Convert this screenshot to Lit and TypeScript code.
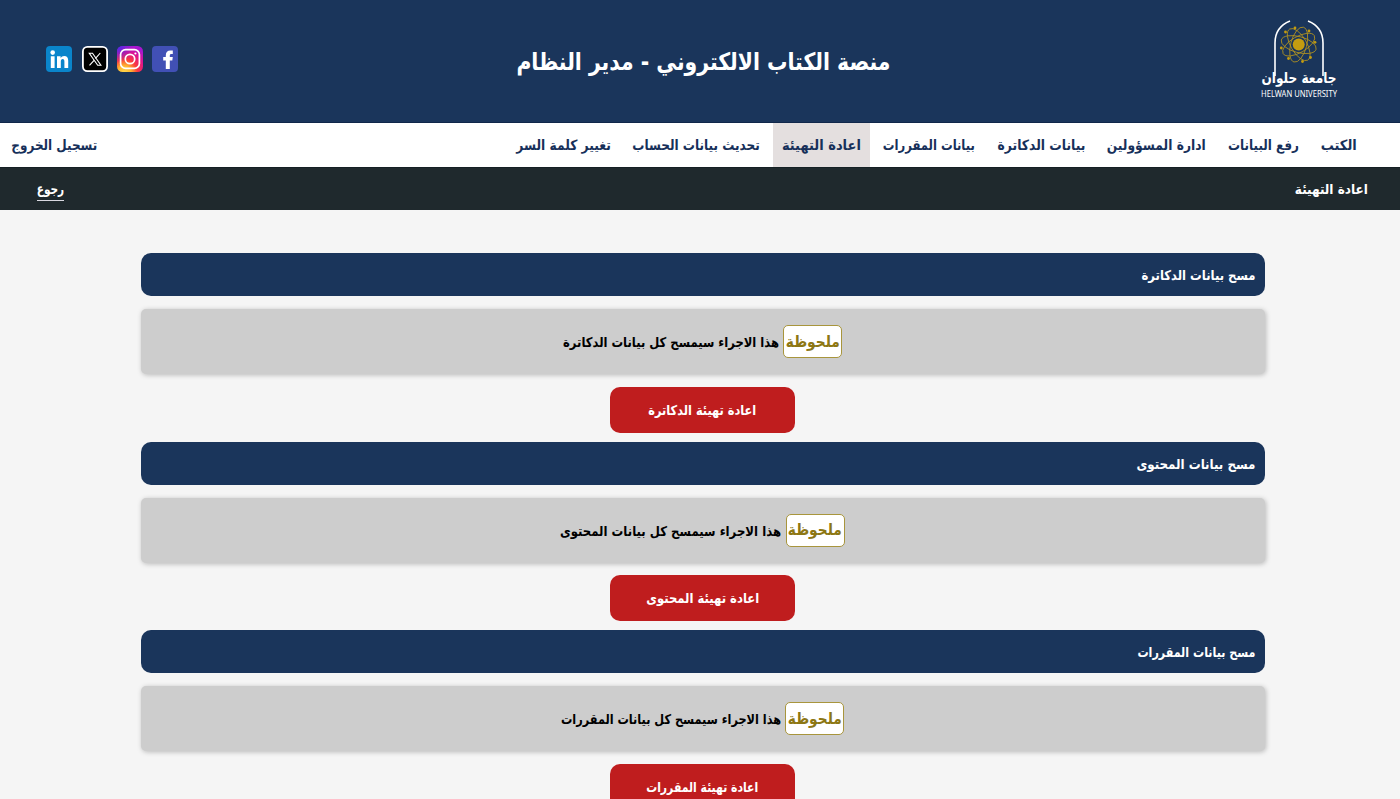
import { LitElement, html, svg, css } from "lit";
import { customElement, property, query } from "lit/decorators.js";

/** One line of text, condensed or stretched to take up an exact width. */
@customElement("fit-text")
class FitText extends LitElement {
  static styles = css`
    :host { display: block; white-space: nowrap; overflow: visible; flex: none; }
    .line { display: inline-block; transform-origin: right center; }
  `;
  @property({ type: Number }) width = 100;
  @property() text = "";
  @query(".line") line!: HTMLElement;

  updated() {
    this.style.width = `${this.width}px`;
    const natural = this.line.getBoundingClientRect().width;
    if (natural) this.line.style.transform = `scaleX(${this.width / natural})`;
  }
  render() {
    return html`<span class="line">${this.text}</span>`;
  }
}

const NAV = [
  { text: "الكتب", width: 36 },
  { text: "رفع البيانات", width: 71 },
  { text: "ادارة المسؤولين", width: 99 },
  { text: "بيانات الدكاترة", width: 88 },
  { text: "بيانات المقررات", width: 92 },
  { text: "اعادة التهيئة", width: 79, active: true },
  { text: "تحديث بيانات الحساب", width: 127.5 },
  { text: "تغيير كلمة السر", width: 94.5 },
];

const SECTIONS = [
  { title: "مسح بيانات الدكاترة", tw: 114, note: "هذا الاجراء سيمسح كل بيانات الدكاترة", nw: 216, button: "اعادة تهيئة الدكاترة", bw: 108 },
  { title: "مسح بيانات المحتوى", tw: 119, note: "هذا الاجراء سيمسح كل بيانات المحتوى", nw: 221, button: "اعادة تهيئة المحتوى", bw: 113 },
  { title: "مسح بيانات المقررات", tw: 118, note: "هذا الاجراء سيمسح كل بيانات المقررات", nw: 220, button: "اعادة تهيئة المقررات", bw: 112 },
];

const ELECTRONS = [[35, 18], [49, 21], [55, 32.3], [50.5, 47.5], [42.5, 51.5], [28.5, 48.5], [21.3, 38], [25.5, 22]];

@customElement("app-root")
class AppRoot extends LitElement {
  static styles = css`
    :host {
      display: block;
      height: 799px;
      overflow: hidden;
      background: #f5f5f5;
      direction: rtl;
      font-family: "DejaVu Sans", sans-serif;
      font-weight: 700;
      font-size: 14px;
      line-height: 20px;
      color: #fff;
    }
    * { box-sizing: border-box; }
    header {
      height: 123px;
      background: #1a355b;
      border-bottom: 1px solid #10274a;
      display: grid;
      grid-template-columns: 510px 1fr 510px;
      align-items: center;
    }
    .logo { display: block; overflow: visible; direction: ltr; margin: 0 50px 10px 0; }
    .title { font-size: 24px; line-height: 34px; padding-top: 1px; }
    .social { display: flex; direction: ltr; gap: 9.2px; padding: 0 0 5px 46.4px; }
    .social svg { display: block; }
    nav {
      height: 44px;
      background: #fff;
      color: #17305a;
      display: flex;
      padding: 0 32px 0 2px;
    }
    .item { display: flex; align-items: center; margin: 0 2px; padding: 0 9px; height: 44px; }
    .active { background: #e4dfdf; }
    .logout { margin-right: auto; margin-left: 0; }
    .crumbs {
      height: 43px;
      background: #1f292d;
      border-top: 1px solid #152024;
      display: flex;
      justify-content: space-between;
      align-items: center;
      padding: 0 32px 1px 36.5px;
      font-size: 13.5px;
    }
    .back { border-bottom: 1px solid #d8d8e0; margin-top: 3px; padding-bottom: 1px; }
    main { width: 1124px; margin: 43px 135.5px 0 0; }
    h2 {
      height: 43px;
      margin: 0 0 13px;
      padding: 1px 9px 0;
      border-radius: 10px;
      background: #1a355b;
      font-size: 13.5px;
      display: flex;
      align-items: center;
    }
    .note {
      height: 65px;
      margin-bottom: 12.5px;
      border-radius: 5px;
      background: #cdcdcd;
      box-shadow: 1px 1px 5px rgba(0, 0, 0, 0.25);
      color: #000;
      font-size: 13.5px;
      display: flex;
      gap: 4px;
      align-items: center;
      justify-content: center;
    }
    .note > fit-text { padding-top: 1px; }
    .tag {
      height: 33px;
      width: 59px;
      display: flex;
      align-items: center;
      justify-content: center;
      border: 1px solid #a8953c;
      border-radius: 5px;
      background: #fff;
      color: #8d7714;
      font-size: 16px;
    }
    button {
      display: flex;
      align-items: center;
      justify-content: center;
      width: 185px;
      height: 46px;
      margin: 0 auto 9px;
      padding: 0;
      border: 0;
      border-radius: 10px;
      background: #bf1d1e;
      color: #fff;
      font: inherit;
      font-size: 13.5px;
    }
    .ar { font-size: 15px; }
    .en { font: 400 8.8px "Noto Sans", sans-serif; }
  `;

  logo() {
    return html`<svg class="logo" width="100" height="92" viewBox="-10 0 100 92">
      <g fill="none" stroke="#fff" stroke-width="1.6">
        <path d="M30 11Q15 17 15 33V66" />
        <path d="M48 11Q63 17 63 33V66" />
      </g>
      <g fill="none" stroke="#b39420" stroke-width=".8">
        ${[15, 60, 105, 150].map((a) => svg`<ellipse cx="38.7" cy="34.6" rx="18" ry="8" transform="rotate(${a} 38.7 34.6)" />`)}
      </g>
      <g fill="#c39c10">
        <circle cx="38.7" cy="34.6" r="6" />
        ${ELECTRONS.map(([x, y]) => svg`<circle cx=${x} cy=${y} r="1.4" />`)}
      </g>
      <text class="ar" x="39" y="73" text-anchor="middle" fill="#fff" textLength="75" lengthAdjust="spacingAndGlyphs">جامعة حلوان</text>
      <text class="en" x="39" y="87.3" text-anchor="middle" fill="#fff" textLength="76" lengthAdjust="spacingAndGlyphs">HELWAN UNIVERSITY</text>
    </svg>`;
  }

  social() {
    return html`<div class="social">
      <svg width="26" height="26" viewBox="0 0 26 26">
        <rect width="26" height="26" rx="4" fill="#0a85cb" />
        <circle cx="6.7" cy="6.6" r="2.3" fill="#fff" />
        <path fill="#fff" d="M4.8 10.2h3.8V22H4.8zM11 10.2h3.6v1.7c.8-1.3 2-2 3.6-2 2.9 0 4 1.9 4 4.9V22h-3.8v-6.4c0-1.600-.5-2.500-1.700-2.500-1.300 0-1.900 1-1.900 2.500V22H11z" />
      </svg>
      <svg width="26" height="26" viewBox="0 0 26 26">
        <rect x=".9" y=".9" width="24.2" height="24.2" rx="4.5" fill="#000" stroke="#fff" stroke-width="1.8" />
        <path fill="none" stroke="#fff" stroke-width="1.1" d="M7.3 7.2h3.2L18.900 19.200h-3.200zM18.300 7l-5 5.600M12.300 14.100L7.500 19.400" />
      </svg>
      <svg width="26" height="26" viewBox="0 0 26 26">
        <defs>
          <radialGradient id="warm" cx=".28" cy="1.02" r="1.05">
            <stop offset="0" stop-color="#ffd84d" /><stop offset=".25" stop-color="#ffb52e" />
            <stop offset=".48" stop-color="#fa3c3c" /><stop offset=".75" stop-color="#e0148c" />
            <stop offset="1" stop-color="#a816d0" />
          </radialGradient>
          <radialGradient id="cool" cx="0" cy="0" r=".65">
            <stop offset="0" stop-color="#3a30f0" /><stop offset="1" stop-color="#6020f0" stop-opacity="0" />
          </radialGradient>
        </defs>
        <rect width="26" height="26" rx="5.500" fill="url(#warm)" />
        <rect width="26" height="26" rx="5.500" fill="url(#cool)" />
        <rect x="3.600" y="3.600" width="18.800" height="18.800" rx="5" fill="none" stroke="#fff" stroke-width="1.700" />
        <circle cx="13" cy="13" r="4.700" fill="none" stroke="#fff" stroke-width="1.700" />
        <circle cx="18.400" cy="7.500" r="1.100" fill="#fff" />
      </svg>
      <svg width="26" height="26" viewBox="0 0 26 26">
        <rect width="26" height="26" rx="4" fill="#4150b5" />
        <path fill="#fff" d="M13.800 23v-8.500h-2.600v-3.600h2.600V9.500c0-3.200 1.700-4.900 4.600-4.900h2.400v3.500h-1.300c-1.300 0-1.700.6-1.700 1.600v1.200h3l-.5 3.600h-2.500V23z" />
      </svg>
    </div>`;
  }

  render() {
    return html`
      <header>
        ${this.logo()}
        <fit-text class="title" .width=${374} text="منصة الكتاب الالكتروني - مدير النظام"></fit-text>
        ${this.social()}
      </header>
      <nav>
        ${NAV.map((n) => html`<a class="item ${n.active ? "active" : ""}"><fit-text .width=${n.width} .text=${n.text}></fit-text></a>`)}
        <a class="item logout"><fit-text .width=${86} text="تسجيل الخروج"></fit-text></a>
      </nav>
      <div class="crumbs">
        <fit-text .width=${73} text="اعادة التهيئة"></fit-text>
        <a class="back"><fit-text .width=${27.5} text="رجوع"></fit-text></a>
      </div>
      <main>
        ${SECTIONS.map((s) => html`
          <section>
            <h2><fit-text .width=${s.tw} .text=${s.title}></fit-text></h2>
            <div class="note">
              <span class="tag"><fit-text .width=${54} text="ملحوظة"></fit-text></span>
              <fit-text .width=${s.nw} .text=${s.note}></fit-text>
            </div>
            <button><fit-text .width=${s.bw} .text=${s.button}></fit-text></button>
          </section>`)}
      </main>
    `;
  }
}
